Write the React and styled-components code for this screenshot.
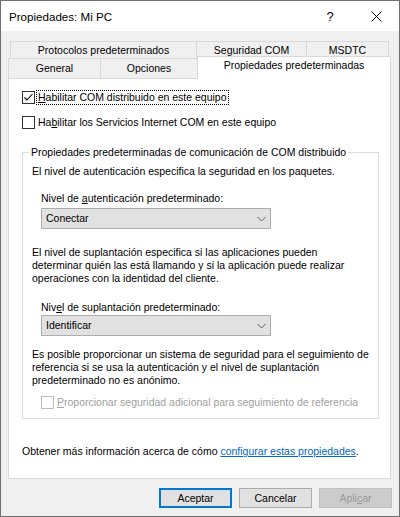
import React from "react";
import styled, { createGlobalStyle } from "styled-components";

const GlobalStyle = createGlobalStyle`
  html, body {
    margin: 0;
    padding: 0;
    background: #ffffff;
  }
`;

const backTabs = [
  { label: "Protocolos predeterminados", w: 187 },
  { label: "Seguridad COM", w: 111 },
  { label: "MSDTC", w: 83 },
];

const frontTabs = [
  { label: "General", w: 93 },
  { label: "Opciones", w: 98 },
  { label: "Propiedades predeterminadas", w: 194, active: true },
];

const Window = styled.div`
  width: 400px;
  height: 517px;
  box-sizing: border-box;
  border: 1px solid #707070;
  background: #f0f0f0;
  display: flex;
  flex-direction: column;
  font-family: "Liberation Sans", Arial, sans-serif;
  font-size: 10.5px;
  line-height: 13px;
  color: #000;
`;

const TitleBar = styled.div`
  height: 30px;
  flex: none;
  background: #ffffff;
  display: flex;
  align-items: center;
`;

const Title = styled.div`
  flex: 1;
  padding-left: 8px;
  font-size: 11.6px;
  line-height: normal;
`;

const TitleButton = styled.div`
  width: 46px;
  height: 30px;
  display: flex;
  align-items: center;
  justify-content: center;
  font-size: 13px;
  color: #000;
`;

const Body = styled.div`
  flex: 1;
  display: flex;
  flex-direction: column;
  padding: 10px 8px 0 7px;
`;

const TabRow = styled.div`
  display: flex;
  height: ${(p) => p.$h}px;
  margin: 0 ${(p) => p.$inset}px;
`;

const Tab = styled.div`
  box-sizing: border-box;
  width: ${(p) => p.$w}px;
  height: ${(p) => (p.$active ? p.$h + 3 : p.$h)}px;
  margin-top: ${(p) => (p.$active ? -2 : 0)}px;
  border: 1px solid #d9d9d9;
  border-bottom: none;
  background: ${(p) => (p.$active ? "#ffffff" : "#f0f0f0")};
  display: flex;
  align-items: center;
  justify-content: center;
  padding-bottom: ${(p) => (p.$active ? 5 : 0)}px;
  white-space: nowrap;
  position: ${(p) => (p.$active ? "relative" : "static")};
  z-index: ${(p) => (p.$active ? 1 : "auto")};

  & + & {
    margin-left: -1px;
  }
`;

const Panel = styled.div`
  box-sizing: border-box;
  height: 401px;
  border: 1px solid #d9d9d9;
  background: #ffffff;
  display: flex;
  flex-direction: column;
  padding: 11px 11px 0 13px;
`;

const CheckRow = styled.label`
  display: flex;
  align-items: center;
  height: 15px;
  gap: 2px;
  margin-top: ${(p) => p.$mt || 0}px;
  margin-left: ${(p) => p.$ml || 0}px;
  color: ${(p) => (p.$disabled ? "#a0a0a0" : "#000")};
`;

const Box = styled.span`
  box-sizing: border-box;
  width: 13px;
  height: 13px;
  flex: none;
  border: 1px solid ${(p) => (p.$disabled ? "#bcbcbc" : "#333333")};
  background: #ffffff;
  display: flex;
  align-items: center;
  justify-content: center;
`;

const CheckText = styled.span`
  padding: 0 1px;
  outline: ${(p) => (p.$focus ? "1px dotted #000" : "none")};
  outline-offset: 0;
  white-space: nowrap;
`;

const Group = styled.fieldset`
  margin: 16px 0 0;
  padding: 0 9px 8px;
  border: 1px solid #dcdcdc;
  min-width: 0;
`;

const Legend = styled.legend`
  padding: 0 2px;
  margin-left: -3px;
  line-height: 13px;
`;

const Text = styled.div`
  margin-top: ${(p) => p.$mt || 0}px;
  margin-left: ${(p) => p.$ml || 0}px;
`;

const Combo = styled.div`
  box-sizing: border-box;
  width: 230px;
  height: 21px;
  margin-top: ${(p) => p.$mt || 0}px;
  margin-left: 9px;
  border: 1px solid #adadad;
  background: #e1e1e1;
  display: flex;
  align-items: center;
  justify-content: space-between;
  padding: 0 4px 0 4px;
`;

const Link = styled.span`
  color: #0066cc;
  text-decoration: underline;
`;

const Footer = styled.div`
  display: flex;
  justify-content: flex-end;
  gap: 7px;
  padding-top: 9px;
  margin-right: -1px;
`;

const Button = styled.div`
  box-sizing: border-box;
  width: 73px;
  height: 20px;
  display: flex;
  align-items: center;
  justify-content: center;
  background: ${(p) => (p.$disabled ? "#cccccc" : "#e1e1e1")};
  border: 1px solid
    ${(p) => (p.$default ? "#0078d7" : p.$disabled ? "#bfbfbf" : "#adadad")};
  box-shadow: ${(p) => (p.$default ? "inset 0 0 0 1px #0078d7" : "none")};
  color: ${(p) => (p.$disabled ? "#9a9a9a" : "#000")};
`;

const Check = () => (
  <svg width="11" height="11" viewBox="0 0 11 11">
    <path d="M1.5 5.5 L4 8 L9.5 2" fill="none" stroke="#000" strokeWidth="1.1" />
  </svg>
);

const Chevron = () => (
  <svg width="9" height="6" viewBox="0 0 9 6">
    <path d="M0.5 1 L4.5 5 L8.5 1" fill="none" stroke="#606060" strokeWidth="1" />
  </svg>
);

const Close = () => (
  <svg width="11" height="11" viewBox="0 0 11 11">
    <path d="M0.5 0.5 L10.5 10.5 M10.5 0.5 L0.5 10.5" stroke="#000" strokeWidth="1" />
  </svg>
);

const App = () => {
  return (
    <>
      <GlobalStyle />
      <Window>
        <TitleBar>
          <Title>Propiedades: Mi PC</Title>
          <TitleButton>?</TitleButton>
          <TitleButton>
            <Close />
          </TitleButton>
        </TitleBar>
        <Body>
          <TabRow $h={17} $inset={2}>
            {backTabs.map((t) => (
              <Tab key={t.label} $w={t.w} $h={17}>
                {t.label}
              </Tab>
            ))}
          </TabRow>
          <TabRow $h={20} $inset={0}>
            {frontTabs.map((t) => (
              <Tab key={t.label} $w={t.w} $h={20} $active={t.active}>
                {t.label}
              </Tab>
            ))}
          </TabRow>
          <Panel>
            <CheckRow>
              <Box>
                <Check />
              </Box>
              <CheckText $focus>
                <u>H</u>abilitar COM distribuido en este equipo
              </CheckText>
            </CheckRow>
            <CheckRow $mt={10}>
              <Box />
              <CheckText>
                Ha<u>b</u>ilitar los Servicios Internet COM en este equipo
              </CheckText>
            </CheckRow>

            <Group>
              <Legend>Propiedades predeterminadas de comunicación de COM distribuido</Legend>
              <Text $mt={6}>
                El nivel de autenticación especifica la seguridad en los paquetes.
              </Text>
              <Text $mt={14} $ml={9}>
                Nivel de <u>a</u>utenticación predeterminado:
              </Text>
              <Combo $mt={3}>
                Conectar
                <Chevron />
              </Combo>
              <Text $mt={17}>
                El nivel de suplantación especifica si las aplicaciones pueden
                <br />
                determinar quién las está llamando y si la aplicación puede realizar
                <br />
                operaciones con la identidad del cliente.
              </Text>
              <Text $mt={16} $ml={9}>
                Niv<u>e</u>l de suplantación predeterminado:
              </Text>
              <Combo $mt={1}>
                Identificar
                <Chevron />
              </Combo>
              <Text $mt={12}>
                Es posible proporcionar un sistema de seguridad para el seguimiento de
                <br />
                referencia si se usa la autenticación y el nivel de suplantación
                <br />
                predeterminado no es anónimo.
              </Text>
              <CheckRow $mt={8} $ml={9} $disabled>
                <Box $disabled />
                <CheckText>
                  <u>P</u>roporcionar seguridad adicional para seguimiento de referencia
                </CheckText>
              </CheckRow>
            </Group>

            <Text $mt={26}>
              Obtener más información acerca de cómo <Link>configurar estas propiedades</Link>.
            </Text>
          </Panel>
          <Footer>
            <Button $default>Aceptar</Button>
            <Button>Cancelar</Button>
            <Button $disabled>
              Apli<u>c</u>ar
            </Button>
          </Footer>
        </Body>
      </Window>
    </>
  );
};

export default App;
